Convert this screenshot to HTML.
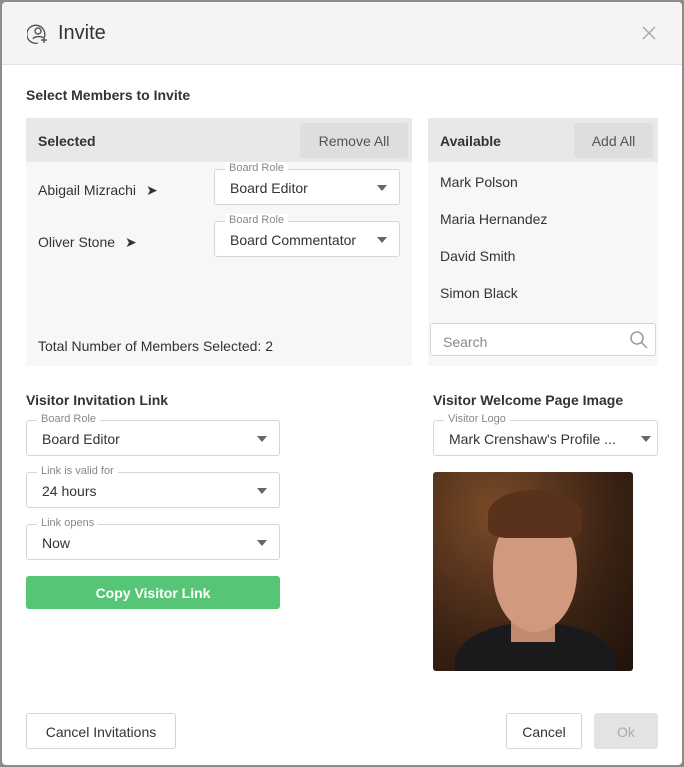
<!DOCTYPE html><html><head><style>
*{box-sizing:border-box}body{margin:0;width:684px;height:767px;background:#8c8c8c;font-family:"Liberation Sans",sans-serif;color:#333;overflow:hidden}
.dlg{position:absolute;left:2px;top:2px;width:680px;height:763px;background:#fff;border-radius:4px;overflow:hidden}
.hd{height:63px;background:#f4f4f4;border-bottom:1px solid #dde3e8;position:relative}
.a{position:absolute}
.t{font-size:14px}
.b{font-weight:bold}
.sel{position:absolute;border:1px solid #d6d6d6;border-radius:3px;background:#fff}
.sel .l{position:absolute;top:-8px;left:10px;background:#fff;padding:0 4px;font-size:11px;color:#888}
.sel .v{position:absolute;left:15px;top:10px;font-size:14px;color:#333}
.sel .c{position:absolute;right:12px;top:15px;border-left:5px solid transparent;border-right:5px solid transparent;border-top:6px solid #666}
.btn{position:absolute;border:1px solid #d3d3d3;border-radius:3px;background:#fff;text-align:center;font-size:14px}
</style></head><body><div class="dlg">
<div class="hd">
<svg class="a" style="left:25px;top:21px" width="22" height="22" viewBox="0 0 22 22" fill="none" stroke="#555" stroke-width="1.4"><path d="M17 15A9 9 0 1 0 11 20"/><circle cx="11" cy="8" r="3"/><path d="M6 16c1-3 9-3 10-1"/><path d="M17 14v6M14 17h6"/></svg>
<div class="a" style="left:56px;top:20px;font-size:20px;color:#333">Invite</div>
<svg class="a" style="left:640px;top:24px" width="14" height="14" viewBox="0 0 14 14" stroke="#aaa" stroke-width="1.5"><path d="M1 1L13 13M13 1L1 13"/></svg>
</div>
<div class="a t b" style="left:24px;top:85px">Select Members to Invite</div>
<div class="a" style="left:24px;top:116px;width:386px;height:248px;background:#f7f7f7"></div>
<div class="a" style="left:24px;top:116px;width:386px;height:44px;background:#e8e8e8"></div>
<div class="a t b" style="left:36px;top:131px">Selected</div>
<div class="a" style="left:298px;top:121px;width:108px;height:35px;background:#dedede;border-radius:3px;text-align:center;line-height:37px;font-size:14px;color:#555">Remove All</div>
<div class="a t" style="left:36px;top:180px">Abigail Mizrachi <span style="margin-left:6px">➤</span></div>
<div class="sel" style="left:212px;top:167px;width:186px;height:36px"><span class="l">Board Role</span><span class="v">Board Editor</span><span class="c"></span></div>
<div class="a t" style="left:36px;top:232px">Oliver Stone <span style="margin-left:6px">➤</span></div>
<div class="sel" style="left:212px;top:219px;width:186px;height:36px"><span class="l">Board Role</span><span class="v">Board Commentator</span><span class="c"></span></div>
<div class="a t" style="left:36px;top:336px">Total Number of Members Selected: 2</div>
<div class="a" style="left:426px;top:116px;width:230px;height:248px;background:#f7f7f7"></div>
<div class="a" style="left:426px;top:116px;width:230px;height:44px;background:#e8e8e8"></div>
<div class="a t b" style="left:438px;top:131px">Available</div>
<div class="a" style="left:572px;top:121px;width:79px;height:35px;background:#dedede;border-radius:3px;text-align:center;line-height:37px;font-size:14px;color:#555">Add All</div>
<div class="a t" style="left:438px;top:172px">Mark Polson</div>
<div class="a t" style="left:438px;top:209px">Maria Hernandez</div>
<div class="a t" style="left:438px;top:246px">David Smith</div>
<div class="a t" style="left:438px;top:283px">Simon Black</div>
<div class="sel" style="left:428px;top:321px;width:226px;height:33px"><span class="v" style="top:10px;left:12px;color:#888">Search</span>
<svg class="a" style="right:6px;top:6px" width="20" height="20" viewBox="0 0 20 20" fill="none" stroke="#999" stroke-width="1.5"><circle cx="8" cy="8" r="6"/><path d="M12.5 12.5L18 18"/></svg></div>
<div class="a t b" style="left:24px;top:390px">Visitor Invitation Link</div>
<div class="sel" style="left:24px;top:418px;width:254px;height:36px"><span class="l">Board Role</span><span class="v">Board Editor</span><span class="c"></span></div>
<div class="sel" style="left:24px;top:470px;width:254px;height:36px"><span class="l">Link is valid for</span><span class="v">24 hours</span><span class="c"></span></div>
<div class="sel" style="left:24px;top:522px;width:254px;height:36px"><span class="l">Link opens</span><span class="v">Now</span><span class="c"></span></div>
<div class="a b" style="left:24px;top:574px;width:254px;height:33px;background:#56c676;border-radius:3px;color:#fff;text-align:center;line-height:35px;font-size:14px">Copy Visitor Link</div>
<div class="a t b" style="left:431px;top:390px">Visitor Welcome Page Image</div>
<div class="sel" style="left:431px;top:418px;width:225px;height:36px"><span class="l">Visitor Logo</span><span class="v">Mark Crenshaw's Profile ...</span><span class="c" style="right:6px"></span></div>
<div class="a" style="left:431px;top:470px;width:200px;height:199px;border-radius:3px;overflow:hidden;background:radial-gradient(ellipse at 30% 20%,#7a4a28,#3a2214 60%,#1e120a)">
<div class="a" style="left:22px;top:150px;width:160px;height:80px;background:#1a1a1c;border-radius:50% 50% 0 0"></div>
<div class="a" style="left:78px;top:140px;width:44px;height:30px;background:#c08a6e"></div>
<div class="a" style="left:60px;top:40px;width:84px;height:120px;background:#d19a7e;border-radius:45% 45% 50% 50%"></div>
<div class="a" style="left:55px;top:18px;width:94px;height:48px;background:#5a321c;border-radius:50% 50% 20% 20%"></div>
</div>
<div class="btn" style="left:24px;top:711px;width:150px;height:36px;line-height:36px">Cancel Invitations</div>
<div class="btn" style="left:504px;top:711px;width:76px;height:36px;line-height:36px">Cancel</div>
<div class="a" style="left:592px;top:711px;width:64px;height:36px;line-height:38px;background:#e3e3e3;border-radius:3px;text-align:center;color:#aaa;font-size:14px">Ok</div>
</div></body></html>
